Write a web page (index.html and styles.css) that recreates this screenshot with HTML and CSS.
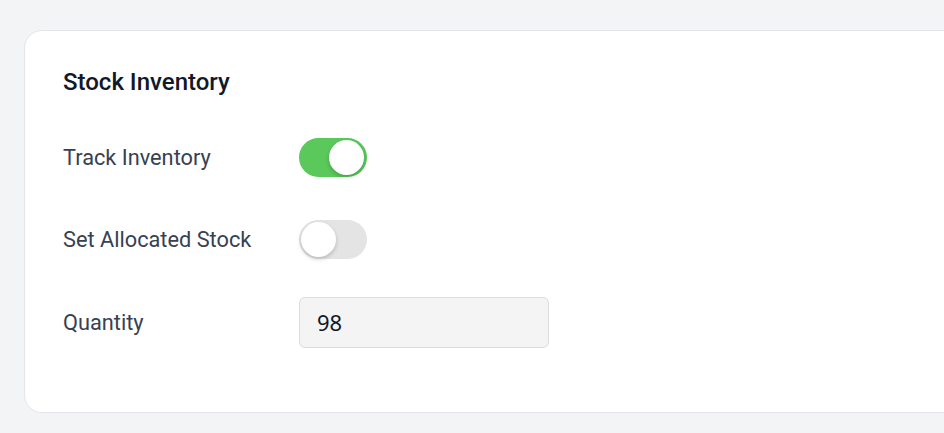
FILE: index.html
```html
<!DOCTYPE html>
<html>
<head>
<meta charset="utf-8">
<link rel="stylesheet" href="styles.css">
</head>
<body>
<div class="page">
  <section class="card">
    <h2 class="card-title">Stock Inventory</h2>
    <div class="form">
      <div class="row">
        <span class="label">Track Inventory</span>
        <span class="toggle toggle-on"><span class="knob"></span></span>
      </div>
      <div class="row">
        <span class="label">Set Allocated Stock</span>
        <span class="toggle"><span class="knob"></span></span>
      </div>
      <div class="row row-field">
        <span class="label">Quantity</span>
        <div class="input">98</div>
      </div>
    </div>
  </section>
</div>
</body>
</html>
```
FILE: styles.css
```css
html, body {
  margin: 0;
  padding: 0;
  background: #f3f4f6;
  overflow: hidden;
}
.page {
  padding: 30px 0 0 24px;
  width: 1000px;
}
.card {
  background: #fff;
  border: 1px solid #e3e5e8;
  border-radius: 18px;
  height: 383px;
  box-sizing: border-box;
  padding: 36px 38px 0 38px;
  font-family: Roboto, "Liberation Sans", sans-serif;
}
.card-title {
  margin: 0;
  font-size: 24px;
  font-weight: 500;
  color: #111827;
  line-height: 30px;
}
.form {
  margin-top: 34px;
  display: flex;
  flex-direction: column;
  gap: 30px;
}
.row {
  display: grid;
  grid-template-columns: 236px auto;
  align-items: center;
  height: 52px;
}
.row-field {
  margin-top: 1px;
}
.label {
  font-size: 21.75px;
  color: #374151;
}
.toggle {
  position: relative;
  width: 68px;
  height: 39px;
  border-radius: 20px;
  background: #e4e4e4;
  display: block;
}
.toggle-on {
  background: #5ac85a;
}
.knob {
  position: absolute;
  top: 2px;
  left: 2px;
  width: 35px;
  height: 35px;
  border-radius: 50%;
  background: #fff;
  box-shadow: 0 2px 4px rgba(0,0,0,0.2);
}
.toggle-on .knob {
  left: 30px;
}
.input {
  width: 250px;
  height: 51px;
  box-sizing: border-box;
  background: #f4f4f5;
  border: 1px solid #dcdcdc;
  border-radius: 6px;
  padding: 0 17px;
  display: flex;
  align-items: center;
  font-family: "Noto Sans", "Open Sans", sans-serif;
  font-size: 22px;
  color: #111827;
}
```
